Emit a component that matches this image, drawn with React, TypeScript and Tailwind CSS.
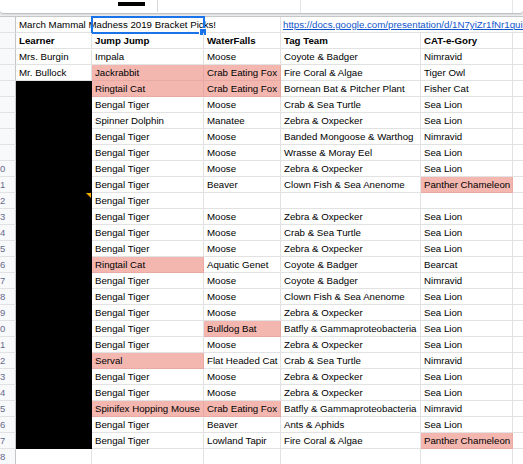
import React from 'react';

// "*" marks a pink (highlighted) pick, "#" a redacted learner cell
const rows: string[][] = [
  ['Mrs. Burgin', 'Impala', 'Moose', 'Coyote & Badger', 'Nimravid'],
  ['Mr. Bullock', '*Jackrabbit', '*Crab Eating Fox', 'Fire Coral & Algae', 'Tiger Owl'],
  ['#', '*Ringtail Cat', '*Crab Eating Fox', 'Bornean Bat & Pitcher Plant', 'Fisher Cat'],
  ['#', 'Bengal Tiger', 'Moose', 'Crab & Sea Turtle', 'Sea Lion'],
  ['#', 'Spinner Dolphin', 'Manatee', 'Zebra & Oxpecker', 'Sea Lion'],
  ['#', 'Bengal Tiger', 'Moose', 'Banded Mongoose & Warthog', 'Nimravid'],
  ['#', 'Bengal Tiger', 'Moose', 'Wrasse & Moray Eel', 'Sea Lion'],
  ['#', 'Bengal Tiger', 'Moose', 'Zebra & Oxpecker', 'Sea Lion'],
  ['#', 'Bengal Tiger', 'Beaver', 'Clown Fish & Sea Anenome', '*Panther Chameleon'],
  ['#!', 'Bengal Tiger', '', '', ''],
  ['#', 'Bengal Tiger', 'Moose', 'Zebra & Oxpecker', 'Sea Lion'],
  ['#', 'Bengal Tiger', 'Moose', 'Crab & Sea Turtle', 'Sea Lion'],
  ['#', 'Bengal Tiger', 'Moose', 'Zebra & Oxpecker', 'Sea Lion'],
  ['#', '*Ringtail Cat', 'Aquatic Genet', 'Coyote & Badger', 'Bearcat'],
  ['#', 'Bengal Tiger', 'Moose', 'Coyote & Badger', 'Nimravid'],
  ['#', 'Bengal Tiger', 'Moose', 'Clown Fish & Sea Anenome', 'Sea Lion'],
  ['#', 'Bengal Tiger', 'Moose', 'Zebra & Oxpecker', 'Sea Lion'],
  ['#', 'Bengal Tiger', '*Bulldog Bat', 'Batfly & Gammaproteobacteria', 'Sea Lion'],
  ['#', 'Bengal Tiger', 'Moose', 'Zebra & Oxpecker', 'Sea Lion'],
  ['#', '*Serval', 'Flat Headed Cat', 'Crab & Sea Turtle', 'Nimravid'],
  ['#', 'Bengal Tiger', 'Moose', 'Zebra & Oxpecker', 'Sea Lion'],
  ['#', 'Bengal Tiger', 'Moose', 'Zebra & Oxpecker', 'Sea Lion'],
  ['#', '*Spinifex Hopping Mouse', '*Crab Eating Fox', 'Batfly & Gammaproteobacteria', 'Nimravid'],
  ['#', 'Bengal Tiger', 'Beaver', 'Ants & Aphids', 'Sea Lion'],
  ['#', 'Bengal Tiger', 'Lowland Tapir', 'Fire Coral & Algae', '*Panther Chameleon'],
  ['', '', '', '', ''],
];

const widths = ['w-[76px]', 'w-[112px]', 'w-[77px]', 'w-[140px]', 'w-[92px]'];

const RowHead = ({ n }: { n: number }) => (
  <div className="w-[16px] shrink-0 h-full bg-[#f8f9fa] border-r border-b border-r-[#c4c7c5] border-b-[#e2e2e2] overflow-hidden text-[9.5px] leading-[15px] text-[#676a8c]">
    {n >= 10 ? String(n).slice(-1) : ''}
  </div>
);

const Cell = ({ value, w }: { value: string; w: string }) => {
  const black = value.startsWith('#');
  const pink = value.startsWith('*');
  const text = black ? '' : pink ? value.slice(1) : value;
  return (
    <div
      className={`${w} shrink-0 h-full border-r border-b px-[3px] whitespace-nowrap overflow-hidden relative ${
        black ? 'bg-black border-black' : pink ? 'bg-[#f4b7b0] border-[#e8aaa4]' : 'border-[#e2e2e2]'
      }`}
    >
      {text}
      {value === '#!' && (
        <div className="absolute top-0 right-0 w-0 h-0 border-l-[5px] border-l-transparent border-t-[5px] border-t-[#f9ab00]" />
      )}
    </div>
  );
};

export default function App() {
  return (
    <div className="w-[523px] h-[464px] overflow-hidden bg-white text-black text-[9.7px] leading-[15px] font-['Liberation_Sans',Arial,sans-serif]">
      {/* top toolbar strip over the column header */}
      <div className="h-[17px] bg-[#eceef0] border-b border-[#c4c7c5] relative">
        <div className="h-[13px] bg-white rounded-b-[3px] shadow-[0_1px_2px_rgba(0,0,0,0.25)] flex">
          <div className="w-[118px]" />
          <div className="w-[27px] h-[4px] mt-[2px] bg-black" />
          <div className="w-[12px]" />
          <div className="w-px h-[12px] bg-[#d5d7da]" />
          <div className="w-[142px]" />
          <div className="w-px h-[13px] bg-[#e6e6e6]" />
          <div className="w-[211px]" />
          <div className="w-px h-[13px] bg-[#e6e6e6]" />
        </div>
      </div>

      {/* row 1: title + link */}
      <div className="h-[16px] flex relative">
        <RowHead n={1} />
        <div className="w-[265px] shrink-0 h-full border-r border-b border-[#e2e2e2] px-[3px] whitespace-nowrap">
          March Mammal Madness 2019 Bracket Picks!
        </div>
        <div className="flex-1 h-full border-b border-[#e2e2e2] px-[2px] whitespace-nowrap overflow-hidden text-[#1155cc] underline">
          https://docs.google.com/presentation/d/1N7yiZr1fNr1quiNqz7pKc3x
        </div>
        <div className="absolute left-[91px] top-[-1px] w-[114px] h-[18px] border-2 border-[#1a73e8]" />
        <div className="absolute left-[199px] top-[11px] w-[8px] h-[8px] bg-[#1a73e8] border border-white" />
      </div>

      {/* row 2: headers */}
      <div className="h-[16px] flex font-bold">
        <RowHead n={2} />
        {['Learner', 'Jump Jump', 'WaterFalls', 'Tag Team', 'CAT-e-Gory'].map((h, i) => (
          <Cell key={h} value={h} w={widths[i]} />
        ))}
        <div className="flex-1 h-full border-b border-[#e2e2e2]" />
      </div>

      {rows.map((r, idx) => (
        <div key={idx} className="h-[16px] flex">
          <RowHead n={idx + 3} />
          {r.map((v, i) => (
            <Cell key={i} value={v} w={widths[i]} />
          ))}
          <div className="flex-1 h-full border-b border-[#e2e2e2]" />
        </div>
      ))}
    </div>
  );
}
